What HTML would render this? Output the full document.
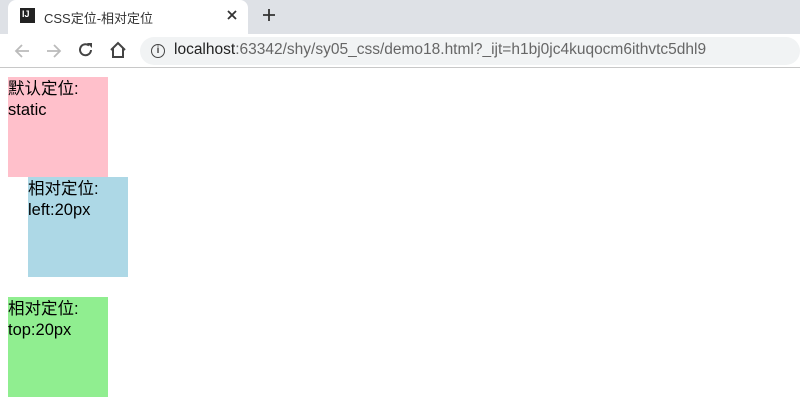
<!DOCTYPE html>
<html><head><meta charset="utf-8"><style>
*{margin:0;padding:0;box-sizing:border-box}
body{width:800px;height:406px;overflow:hidden;background:#fff;font-family:"Liberation Sans","Noto Sans CJK SC",sans-serif;position:relative}
.tabs{position:absolute;left:0;top:0;width:800px;height:34px;background:#dee1e6}
.tab{position:absolute;left:8px;top:0;width:240px;height:34px;background:#fff;border-radius:8px 8px 0 0}
.tb{position:absolute;left:0;top:34px;width:800px;height:34px;background:#fff;border-bottom:1px solid #c8c8c8}
.url{position:absolute;left:140px;top:37px;width:660px;height:28px;background:#f1f3f4;border-radius:14px}
.t{position:absolute;white-space:nowrap}
.content{position:absolute;left:0;top:69px;width:800px}
.box{position:absolute;width:100px;height:100px;font-size:16.5px;line-height:21px;color:#000;padding-top:2px}
</style></head><body>
<div class="tabs"><div class="tab"></div></div>
<div style="position:absolute;left:20px;top:8px;width:15px;height:15px;background:#222"></div>
<div class="t" style="left:22px;top:9px;font-size:9px;color:#fff;font-weight:bold">IJ</div>
<div class="t" style="left:44px;top:8px;font-size:13px;color:#333">CSS定位-相对定位</div>
<svg style="position:absolute;left:227px;top:10px" width="10" height="10"><path d="M1 1L9 9M9 1L1 9" stroke="#333" stroke-width="1.8"/></svg>
<svg style="position:absolute;left:263px;top:9px" width="12" height="12"><path d="M6 0V12M0 6H12" stroke="#333" stroke-width="1.8"/></svg>
<div class="tb"></div>
<svg style="position:absolute;left:14px;top:43px" width="16" height="16"><path d="M15 8H2M8 2L2 8L8 14" fill="none" stroke="#bbb" stroke-width="1.8"/></svg>
<svg style="position:absolute;left:46px;top:43px" width="16" height="16"><path d="M1 8H14M8 2L14 8L8 14" fill="none" stroke="#bbb" stroke-width="1.8"/></svg>
<svg style="position:absolute;left:78px;top:42px" width="16" height="16"><path d="M13 8A5.5 5.5 0 1 1 11 3.5" fill="none" stroke="#444" stroke-width="2"/><path d="M9 1H14V6Z" fill="#444"/></svg>
<svg style="position:absolute;left:109px;top:41px" width="18" height="18"><path d="M2 9 L9 2 L16 9 M4 7 V16 H14 V7" fill="none" stroke="#444" stroke-width="2"/></svg>
<div class="url"></div>
<div style="position:absolute;left:151px;top:44px;width:14px;height:14px;border:1.5px solid #444;border-radius:50%;font-size:10px;line-height:11px;text-align:center;color:#444;font-weight:bold">i</div>
<div class="t" style="left:174px;top:41px;font-size:15.5px;color:#666"><span style="color:#222">localhost</span>:63342/shy/sy05_css/demo18.html?_ijt=h1bj0jc4kuqocm6ithvtc5dhl9</div>
<div class="content">
<div class="box" style="left:8px;top:8px;background:#ffc0cb">默认定位:<br>static</div>
<div class="box" style="left:28px;top:108px;background:#add8e6">相对定位:<br>left:20px</div>
<div class="box" style="left:8px;top:228px;background:#90ee90">相对定位:<br>top:20px</div>
</div>
</body></html>
